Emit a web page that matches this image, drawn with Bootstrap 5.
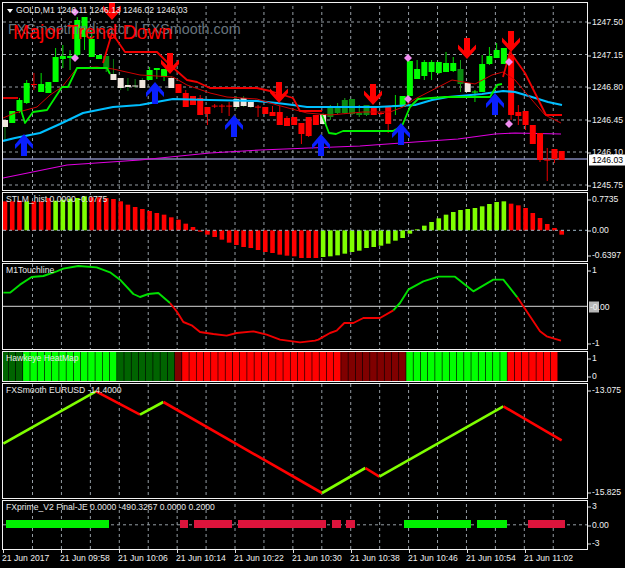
<!DOCTYPE html>
<html lang="en">
<head>
    <meta charset="UTF-8">
    <meta name="viewport" content="width=device-width, initial-scale=1">
    <title>GOLD,M1</title>
    <link href="https://cdn.jsdelivr.net/npm/bootstrap@5.3.0/dist/css/bootstrap.min.css" rel="stylesheet">
    <style>
        html, body { background: #000; height: 100%; overflow: hidden; }
        .terminal { width: 625px; height: 568px; padding: 2px 0 0 2px; font: 8.6px/11px "Liberation Sans", Arial, sans-serif; color: #f0f0f0; }
        .plot-col { width: 586px; gap: 1px; }
        .axis-col { width: 37px; }
        .pane { border: 1px solid #f2f2f2; overflow: hidden; }
        .pane svg { display: block; width: 584px; height: 100%; }
        .pane-main { height: 189px; }
        .pane-stlm { height: 70px; }
        .pane-touch { height: 87px; }
        .pane-heat { height: 31px; }
        .pane-fx { height: 116px; }
        .pane-prime { height: 50px; }
        .pane-tag { position: absolute; left: 3px; top: 1px; white-space: nowrap; color: #e8e8e8; }
        .gold-tag { left: 13px; top: 2px; word-spacing: -0.1px; }
        .gold-arrow { position: absolute; left: 4px; top: 6px; border: 3px solid transparent; border-top: 4px solid #fff; border-bottom: 0; }
        .watermark { position: absolute; left: 5px; top: 17px; font-size: 14.3px; line-height: 18px; color: #68757f; white-space: nowrap; }
        .trend-tag { position: absolute; left: 10px; top: 17px; font-size: 19.5px; line-height: 24px; color: #f00; white-space: nowrap; }
        .ax-label { position: absolute; left: 4px; white-space: nowrap; transform: translateY(-50%); }
        .ax-label::before { content: ""; position: absolute; left: -4px; top: 50%; width: 3px; height: 1px; background: #ddd; }
        .ax-now { left: 1px; padding: 0 3px; background: #fff; color: #000; width: 37px; }
        .ax-now::before { display: none; }
        .ax-zero { left: 2px; }
        .ax-zero::before { display: none; }
        .ax-zero-box { position: absolute; left: -1px; top: 0; width: 10px; height: 100%; background: #b8b8b8; z-index: -1; }
        .time-row { height: 17px; padding-top: 3px; }
        .time-tick { position: relative; width: 58px; flex: none; white-space: nowrap; }
        .time-tick::before { content: ""; position: absolute; left: 1px; top: -3px; width: 1px; height: 3px; background: #ddd; }
    </style>
</head>
<body>
<div class="terminal">
    <div class="d-flex">
        <div class="plot-col d-flex flex-column">
            <div class="pane pane-main position-relative">
                <svg id="mainChart"></svg>
                <span class="watermark">FXSmoothIndicator | FXSmooth.com</span>
                <span class="trend-tag">Major Trend Down</span>
                <span class="gold-arrow"></span>
                <span class="pane-tag gold-tag">GOLD,M1 1246.11 1246.13 1246.02 1246.03</span>
            </div>
            <div class="pane pane-stlm position-relative">
                <svg id="stlmChart"></svg>
                <span class="pane-tag">STLM_hist 0.0000 -0.0775</span>
            </div>
            <div class="pane pane-touch position-relative">
                <svg id="touchChart"></svg>
                <span class="pane-tag">M1Touchline</span>
            </div>
            <div class="pane pane-heat position-relative">
                <svg id="heatChart"></svg>
                <span class="pane-tag">Hawkeye HeatMap</span>
            </div>
            <div class="pane pane-fx position-relative">
                <svg id="fxChart"></svg>
                <span class="pane-tag">FXSmooth EURUSD -14.4000</span>
            </div>
            <div class="pane pane-prime position-relative">
                <svg id="primeChart"></svg>
                <span class="pane-tag">FXprime_V2 Final-JE 0.0000 -490.3267 0.0000 0.2000</span>
            </div>
        </div>
        <div class="axis-col position-relative" id="axis"></div>
    </div>
    <div class="time-row d-flex">
        <span class="time-tick">21 Jun 2017</span>
        <span class="time-tick">21 Jun 09:58</span>
        <span class="time-tick">21 Jun 10:06</span>
        <span class="time-tick">21 Jun 10:14</span>
        <span class="time-tick">21 Jun 10:22</span>
        <span class="time-tick">21 Jun 10:30</span>
        <span class="time-tick">21 Jun 10:38</span>
        <span class="time-tick">21 Jun 10:46</span>
        <span class="time-tick">21 Jun 10:54</span>
        <span class="time-tick">21 Jun 11:02</span>
    </div>
</div>

<script src="https://cdn.jsdelivr.net/npm/bootstrap@5.3.0/dist/js/bootstrap.bundle.min.js"></script>
<script>
    // all chart data is in page pixels, each svg viewBox matches its pane position
    const barX = i => 5 + 7.23 * i;
    const GRID = '#959da4';

    function setChart(id, top, bottom, body) {
      const el = document.getElementById(id);
      el.setAttribute('viewBox', '3 ' + top + ' 584 ' + (bottom - top));
      el.setAttribute('preserveAspectRatio', 'none');
      el.innerHTML = body;
    }

    function vGrid() {
      let s = '';
      for (let i = 0; i < 19; i++) {
        const x = 32.5 + 28.93 * i;
        s += '<line x1="' + x + '" x2="' + x + '" y1="0" y2="568" stroke="' + GRID + '" stroke-dasharray="3 3"/>';
      }
      return s;
    }

    function hLine(y, color, dash, w) {
      return '<line x1="3" x2="587" y1="' + y + '" y2="' + y + '" stroke="' + color + '" stroke-width="' + (w || 1) + '"' + (dash ? ' stroke-dasharray="3 3"' : '') + '/>';
    }

    function poly(pts, color, w) {
      return '<polyline fill="none" stroke-linejoin="round" stroke="' + color + '" stroke-width="' + w + '" points="' + pts.map(p => p.join(',')).join(' ') + '"/>';
    }

    // main pane: [top, bottom, wickTop, wickBottom, kind]
    const candles = [
      [120,127,120,140,'w'],[111,123,111,123,'g'],[100,111,98,113,'g'],[83,103,80,104,'g'],[84,84.8,73,90,'r'],[84,92,73,92,'g'],
      [82,93,82,93,'g'],[57,82,48,82,'g'],[56,59,45,68,'g'],[56,58,50,70,'g'],[20,55,17,58,'g'],[17,37,17,50,'g'],
      [39,57,30,57,'g'],[55,59,55,59,'g'],[56,68,56,72,'d'],[74,80,59,80,'w'],[78,88,78,90,'w'],[85,87,78,91,'w'],
      [85.5,86.2,79,88,'w'],[80,88,78,88,'w'],[70,80,67,80,'g'],[68,70,68,79,'g'],[69,77,69,81,'g'],[78,88,76,88,'w'],
      [84,93,84,93,'r'],[93,107,90,107,'r'],[96,105,96,105,'r'],[98,115,95,115,'r'],[107,114,107,125,'r'],[105.6,106.4,104,108,'r'],
      [105.6,106.4,104,113,'r'],[105.6,106.4,102,116,'r'],[99,107,96,109,'w'],[98,106,96,107,'w'],[102,107,101,108,'w'],[106.6,107.4,105,117,'r'],
      [107,114,107,114,'r'],[112,116,106,116,'r'],[112,125,106,125,'r'],[118,126,116,126,'r'],[117,125,117,125,'r'],[123,134,123,144,'r'],
      [117,136,117,137,'r'],[115,125,115,125,'r'],[114,124,113,125,'w'],[107,117,105,120,'d'],[106,113,103,114,'d'],[100,113,98,114,'d'],
      [99,114,99,115,'d'],[113,115,105,117,'d'],[105,115,105,116,'d'],[106,115,106,115,'r'],[113,114,112,115,'r'],[107,124,107,133,'r'],
      [105,107,95,115,'g'],[96,107,96,107,'g'],[61,96,61,96,'g'],[69,79,60,79,'g'],[62,76,60,80,'g'],[62,72,60,80,'g'],
      [62,73,62,74,'g'],[63,72,52,72,'g'],[63,71,57,72,'g'],[69,84,60,92,'d'],[83,92,83,92,'w'],[91.5,92.5,90,102,'g'],
      [64,92,55,92,'g'],[56,64,47,65,'g'],[50,58,43,58,'g'],[48,64,48,64,'g'],[55,115,48,120,'r'],[112,116,105,125,'r'],
      [111,125,111,130,'r'],[125,144,125,144,'r'],[133,160,133,162,'r'],[159.6,160.6,148,181,'r'],[149,159,149,163,'r'],[151,160,151,160,'r']
    ];
    const bodyColor = { g: '#00ff00', r: '#ff0000', d: '#0a8a10', w: '#f0e6de' };
    const wickColor = { g: '#00e000', r: '#e80000', d: '#18a018', w: '#0a7d10' };

    function drawCandles() {
      return candles.map((c, i) => {
        const x = barX(i);
        return '<line x1="' + x + '" x2="' + x + '" y1="' + c[2] + '" y2="' + c[3] + '" stroke="' + wickColor[c[4]] + '"/>' +
          '<rect x="' + (x - 3) + '" y="' + c[0] + '" width="6" height="' + Math.max(c[1] - c[0], 1) + '" fill="' + bodyColor[c[4]] + '"/>';
      }).join('');
    }

    const cyanLine = [[3,141],[15,138],[40,133],[60,124],[83,113],[113,107],[140,105],[173,99],[210,100],[257,101],[277,103],[293,105],[307,107],[322,107],[377,107],[415,105],[432,100],[448,97],[482,94],[503,91],[515,92],[532,97],[548,102],[562,105]];
    const greenLine1 = [[21,110],[25,123],[33,112],[47,110],[62,87],[68,87],[77,68],[107,68],[110,74]];
    const greenLine2 = [[322,115],[329,133],[336,134],[343,131],[393,131],[402,126],[410,107],[418,99],[445,97],[490,97],[497,85],[502,84]];
    const redLines = [
      [[3,98],[18,98]],
      [[103,63],[112,33],[125,52],[157,52],[170,65],[187,80],[197,82],[210,88],[257,88],[270,91],[293,98],[300,111],[322,111]],
      [[503,77],[510,52],[525,73],[546,115],[562,115]]
    ];
    const thinRed = [[3,118],[15,113],[37,107],[50,95],[62,87],[77,68],[97,67],[113,69],[140,75],[173,77],[187,85],[210,93],[227,97],[257,99],[277,105],[307,113],[330,115],[363,112],[390,112],[403,107],[415,99],[452,80],[475,84],[492,75],[503,72],[515,80],[532,100],[545,115],[561,123]];
    const magenta = [[3,178],[67,165],[140,160],[210,153],[260,150],[310,148],[360,146],[415,142],[458,139],[495,134],[515,133],[561,134]];

    function upArrow(x, y) {
      return '<path transform="translate(' + x + ' ' + y + ')" fill="#0a20ff" d="M0 0L9 10.5V15L3 9V22H-3V9L-9 15V10.5Z"/>';
    }
    function downArrow(x, y) {
      return '<path transform="translate(' + x + ' ' + y + ')" fill="#ff0000" d="M0 0L9 -10V-14.5L3 -8.5V-21H-3V-8.5L-9 -14.5V-10Z"/>';
    }
    function diamond(x, y) {
      return '<path transform="translate(' + x + ' ' + y + ')" fill="#f08cf0" d="M0 -4L4 0L0 4L-4 0Z"/>';
    }

    let main = vGrid();
    [22, 54.5, 87, 120, 152, 185].forEach(y => { main += hLine(y, GRID, true); });
    main += hLine(159, '#8084b4', false, 1.6);
    main += poly(magenta, '#e000e0', 1.2);
    main += drawCandles();
    main += poly(cyanLine, '#00bfff', 2.2);
    main += poly(thinRed, '#d00000', 1);
    redLines.forEach(l => { main += poly(l, '#f00000', 1.8); });
    main += poly(greenLine1, '#00f000', 1.8) + poly(greenLine2, '#00f000', 1.8);
    [[24,134],[155,82],[234,115],[321,134],[401,123],[495,93]].forEach(a => { main += upArrow(a[0], a[1]); });
    [[112,20],[170,74],[279,103],[373,105],[467,59],[511,52]].forEach(a => { main += downArrow(a[0], a[1]); });
    [[75,12],[75,58],[408,58],[408,99],[509,62],[509,124]].forEach(a => { main += diamond(a[0], a[1]); });
    setChart('mainChart', 3, 190, main);

    // STLM histogram, bar ends read from the reference
    const stlmY = [40,40,38,40,40,40,30,38,35,32,30,25,28,28,30,33,40,50,57,63,69,75,80,88,95,107,117,131,140,147,155,164,171,177,180,186,192,195,200,203,205,210,210,210,207,205,202,197,192,188,180,177,173,167,158,150,137,124,113,102,91,80,72,66,63,60,55,48,42,40,47,52,60,75,90,108,120,140];
    const stlmLime = i => i === 3 || (i >= 7 && i <= 11) || (i >= 44 && i <= 69);
    let stlm = vGrid();
    stlmY.forEach((z, i) => {
      const y = 188 + z / 3;
      const top = Math.min(y, 230.3);
      stlm += '<rect x="' + (barX(i) - 2.3) + '" y="' + top + '" width="4.6" height="' + Math.abs(y - 230.3) + '" fill="' + (stlmLime(i) ? '#7fff00' : '#ff0000') + '"/>';
    });
    stlm += hLine(230.3, '#9fb8c8', true);
    setChart('stlmChart', 193, 261, stlm);

    // M1Touchline, colour flips at the zero crossings
    const t = (x, z) => [x / 3, 188 + z / 3];
    const t2 = (x, z) => [310 + x / 3, 188 + z / 3];
    const touchGreen1 = [[10,314],[30,314],[60,290],[95,267],[130,264],[170,250],[190,242],[235,234],[290,238],[330,253],[360,275],[400,318],[420,327],[445,318],[475,315],[510,345]].map(p => t(p[0], p[1]));
    const touchRed1 = [[510,345],[530,370],[550,402],[575,412],[600,432],[640,438],[680,443],[710,435],[760,430],[800,440],[840,455],[900,463],[945,458]].map(p => t(p[0], p[1]))
      .concat([[25,455],[60,435],[80,428],[103,405],[130,405],[160,390],[210,390],[250,367]].map(p => t2(p[0], p[1])));
    const touchGreen2 = [[250,367],[270,345],[296,304],[340,280],[385,266],[435,266],[490,310],[550,275],[580,275],[622,328]].map(p => t2(p[0], p[1]));
    const touchRed2 = [[622,328],[660,385],[690,430],[710,445],[753,458]].map(p => t2(p[0], p[1]));
    let touch = vGrid() + hLine(306.3, '#d8d8d8');
    touch += poly(touchGreen1, '#00e000', 1.9) + poly(touchRed1, '#f00000', 1.9) + poly(touchGreen2, '#00e000', 1.9) + poly(touchRed2, '#f00000', 1.9);
    setChart('touchChart', 264, 349, touch);

    // heat map cells
    function heatColor(i) {
      if (i < 3) return '#006400';
      if (i < 16) return '#00ff00';
      if (i < 24) return '#006400';
      if (i === 24) return '#800000';
      if (i < 47) return '#ff0000';
      if (i < 56) return '#800000';
      if (i < 70) return '#00ff00';
      return '#ff0000';
    }
    let heat = vGrid();
    for (let i = 0; i < 77; i++) {
      heat += '<rect x="' + (barX(i) - 3.6) + '" y="352" width="6.6" height="29" fill="' + heatColor(i) + '"/>';
    }
    setChart('heatChart', 352, 381, heat);

    // FXSmooth segments
    const fx = (x, z) => [x / 3, 378 + z / 3];
    const fx2 = (x, z) => [310 + x / 3, 378 + z / 3];
    let smooth = vGrid();
    smooth += poly([fx(10,197), fx(288,40)], '#7fff00', 2.6);
    smooth += poly([fx(288,40), fx(420,110)], '#ff0000', 2.6);
    smooth += poly([fx(420,110), fx(490,72)], '#7fff00', 2.6);
    smooth += poly([fx(490,72), fx2(36,345)], '#ff0000', 2.6);
    smooth += poly([fx2(36,345), fx2(166,270)], '#7fff00', 2.6);
    smooth += poly([fx2(166,270), fx2(208,296)], '#ff0000', 2.6);
    smooth += poly([fx2(208,296), fx2(580,85)], '#7fff00', 2.6);
    smooth += poly([fx2(580,85), fx2(755,187)], '#ff0000', 2.6);
    setChart('fxChart', 384, 498, smooth);

    // FXprime blocks [x1, x2, colour]
    const blocks = [[6,109,'#00f000'],[180,188,'#dc143c'],[194,232,'#dc143c'],[238,326,'#dc143c'],[332,341,'#dc143c'],[346,355,'#dc143c'],[404,471,'#00f000'],[477,507,'#00f000'],[528,565,'#dc143c']];
    let prime = vGrid() + hLine(524.8, GRID, true);
    blocks.forEach(b => {
      prime += '<rect x="' + b[0] + '" y="520" width="' + (b[1] - b[0]) + '" height="8" fill="' + b[2] + '"/>';
    });
    setChart('primeChart', 501, 549, prime);

    // right axis, top is page y minus the 2px terminal padding
    const axisLabels = [
      ['1247.50',22],['1247.15',55],['1246.80',87],['1246.45',120],['1246.10',152],['1245.75',185],
      ['0.7735',199],['0.00',230],['-0.6397',255],['1',270],['-1',343],['1',358],['0',376],
      ['-13.075',390],['-15.825',492],['3',506],['0.00',525],['-3',543]
    ];
    const axis = document.getElementById('axis');
    let axisHtml = axisLabels.map(a => '<span class="ax-label" style="top:' + (a[1] - 2) + 'px">' + a[0] + '</span>').join('');
    axisHtml += '<span class="ax-label ax-now" style="top:' + (159.5 - 2) + 'px">1246.03</span>';
    axisHtml += '<span class="ax-label ax-zero" style="top:' + (306.5 - 2) + 'px"><i class="ax-zero-box"></i>-0.00</span>';
    axis.innerHTML = axisHtml;
</script>
</body>
</html>
